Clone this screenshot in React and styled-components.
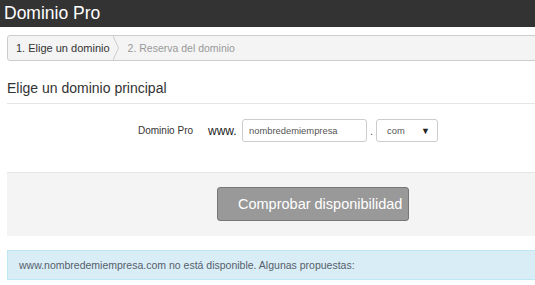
import React from "react";
import styled, { createGlobalStyle } from "styled-components";

const GlobalStyle = createGlobalStyle`
  body {
    margin: 0;
    overflow: hidden;
    font-family: "Liberation Sans", Arial, sans-serif;
    color: #333;
    background: #fff;
  }
`;

const Header = styled.header`
  height: 27px;
  background: #333;
  color: #fff;
  font-size: 17.5px;
  line-height: 26px;
  padding-left: 4px;
`;

const Content = styled.main`
  width: 580px;
  padding-left: 7px;
`;

const Breadcrumb = styled.nav`
  display: flex;
  align-items: stretch;
  margin-top: 8px;
  height: 24px;
  border: 1px solid #ccc;
  border-radius: 3px;
  background: #f4f4f4;
`;

const Step = styled.span`
  display: flex;
  align-items: center;
  font-size: ${(p) => (p.$active ? "11px" : "10.5px")};
  padding: 0 ${(p) => (p.$active ? "3px" : "0")} 0 ${(p) => (p.$active ? "8px" : "9px")};
  color: ${(p) => (p.$active ? "#333" : "#999")};
`;

const Chevron = styled.svg`
  display: block;
  width: 6px;
  height: 24px;
`;

const Heading = styled.h2`
  margin: 18px 0 0;
  padding-bottom: 6px;
  font-size: 14px;
  line-height: 18px;
  font-weight: normal;
  color: #333;
  border-bottom: 1px solid #e5e5e5;
`;

const FormRow = styled.div`
  display: flex;
  align-items: center;
  margin-top: 15px;
  padding-left: 131px;
  height: 23px;
`;

const Label = styled.span`
  font-size: 10px;
  color: #333;
  width: 54px;
  margin-right: 16px;
  white-space: nowrap;
`;

const Prefix = styled.span`
  font-size: 12px;
  color: #222;
  width: 30px;
  margin-right: 4px;
`;

const Field = styled.div`
  box-sizing: border-box;
  height: 23px;
  width: ${(p) => p.$w}px;
  border: 1px solid #ccc;
  border-radius: 3px;
  background: #fff;
  display: flex;
  align-items: center;
  justify-content: space-between;
  padding: 0 ${(p) => p.$pr || 6}px 0 ${(p) => p.$pl || 6}px;
  font-size: 9.4px;
  color: #555;
`;

const Dot = styled.span`
  font-size: 11px;
  color: #555;
  width: 9px;
  text-align: center;
`;

const Arrow = styled.span`
  font-size: 9px;
  color: #222;
`;

const ActionPanel = styled.div`
  box-sizing: border-box;
  margin-top: 30px;
  height: 64px;
  border-top: 1px solid #e5e5e5;
  background: #f4f4f4;
  padding: 14px 0 0 210px;
`;

const Button = styled.button`
  box-sizing: border-box;
  width: 192px;
  height: 34px;
  background: #999;
  border: 1px solid #777;
  border-radius: 3px;
  color: #fff;
  font-family: "Liberation Sans", Arial, sans-serif;
  font-size: 14.5px;
  padding: 0 0 0 20px;
  text-align: left;
  cursor: pointer;
`;

const Alert = styled.div`
  margin-top: 14px;
  height: 28px;
  border: 1px solid #bce8f1;
  background: #d9edf7;
  color: #56606a;
  font-size: 10.5px;
  line-height: 28px;
  padding-left: 11px;
`;

export default function App() {
  return (
    <>
      <GlobalStyle />
      <Header>Dominio Pro</Header>
      <Content>
        <Breadcrumb>
          <Step $active>1. Elige un dominio</Step>
          <Chevron viewBox="0 0 6 24">
            <polyline points="0,0 5.5,12 0,24" fill="none" stroke="#ccc" strokeWidth="1" />
          </Chevron>
          <Step>2. Reserva del dominio</Step>
        </Breadcrumb>
        <Heading>Elige un dominio principal</Heading>
        <FormRow>
          <Label>Dominio Pro</Label>
          <Prefix>www.</Prefix>
          <Field $w={125}>nombredemiempresa</Field>
          <Dot>.</Dot>
          <Field $w={62} $pl={10} $pr={7}>
            com<Arrow>▼</Arrow>
          </Field>
        </FormRow>
        <ActionPanel>
          <Button>Comprobar disponibilidad</Button>
        </ActionPanel>
        <Alert>www.nombredemiempresa.com no está disponible. Algunas propuestas:</Alert>
      </Content>
    </>
  );
}
